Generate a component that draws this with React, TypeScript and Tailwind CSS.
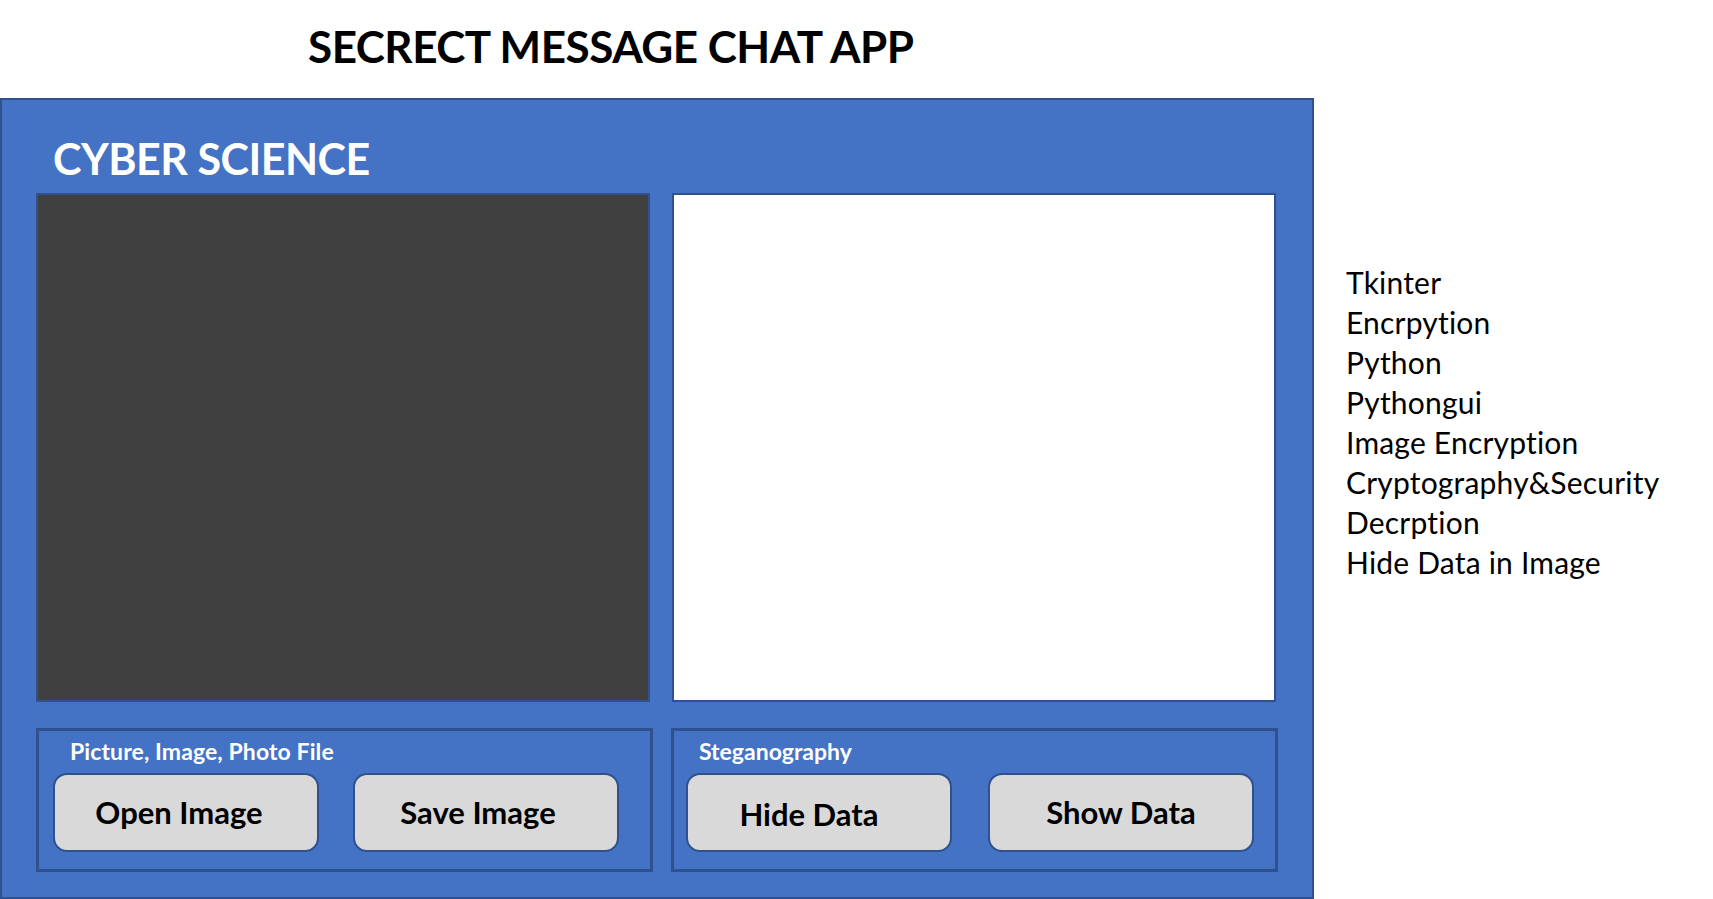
const list = [
  "Tkinter",
  "Encrpytion",
  "Python",
  "Pythongui",
  "Image Encryption",
  "Cryptography&Security",
  "Decrption",
  "Hide Data in Image",
];

type ButtonProps = {
  label: string;
  className?: string;
};

const ActionButton = ({ label, className = "" }: ButtonProps) => (
  <button
    className={`w-[266px] h-[79px] shrink-0 rounded-[14px] border-2 border-[#2f528f] bg-[#d9d9d9] text-black text-[31px] font-bold leading-none flex items-center justify-center ${className}`}
  >
    {label}
  </button>
);

export default function App() {
  return (
    <div className="w-[1713px] h-[899px] bg-white flex flex-col overflow-hidden font-['Lato','Open_Sans',sans-serif]">
      <header className="h-[98px] shrink-0 pl-[308px] pt-[24px]">
        <h1 className="text-[44px] leading-none font-bold tracking-[-0.5px] text-black">
          SECRECT MESSAGE CHAT APP
        </h1>
      </header>

      <div className="flex flex-1">
        <section className="w-[1314px] h-[801px] shrink-0 bg-[#4472c4] border-2 border-[#2f528f] flex flex-col pl-[34px] pt-[37px]">
          <h2 className="text-[43px] leading-none font-bold tracking-[-0.5px] text-white pl-[17px] mb-[13px]">
            CYBER SCIENCE
          </h2>

          <div className="flex h-[509px] gap-[22px]">
            <div className="w-[614px] h-full border-2 border-[#2f528f] bg-[#404040]" />
            <div className="w-[604px] h-full border-2 border-[#2f528f] bg-white" />
          </div>

          <div className="flex mt-[26px] h-[144px] gap-[18px]">
            <div className="w-[617px] h-full border-[3px] border-[#2f528f] flex flex-col pt-[9px] pl-[31px]">
              <p className="text-[23px] leading-none font-bold tracking-[0.1px] text-white">
                Picture, Image, Photo File
              </p>
              <div className="flex mt-[10px] -ml-[17px] gap-[34px]">
                <ActionButton label="Open Image" className="pr-[14px]" />
                <ActionButton label="Save Image" className="pr-[16px]" />
              </div>
            </div>
            <div className="w-[607px] h-full border-[3px] border-[#2f528f] flex flex-col pt-[9px] pl-[25px]">
              <p className="text-[23px] leading-none font-bold text-white">
                Steganography
              </p>
              <div className="flex mt-[10px] -ml-[13px] gap-[36px]">
                <ActionButton label="Hide Data" className="pt-[4px] pr-[20px]" />
                <ActionButton label="Show Data" />
              </div>
            </div>
          </div>
        </section>

        <aside className="pl-[32px] pt-[164px]">
          <ul className="text-[30px] leading-[40px] tracking-[0.2px] text-black">
            {list.map((item) => (
              <li key={item}>{item}</li>
            ))}
          </ul>
        </aside>
      </div>
    </div>
  );
}
